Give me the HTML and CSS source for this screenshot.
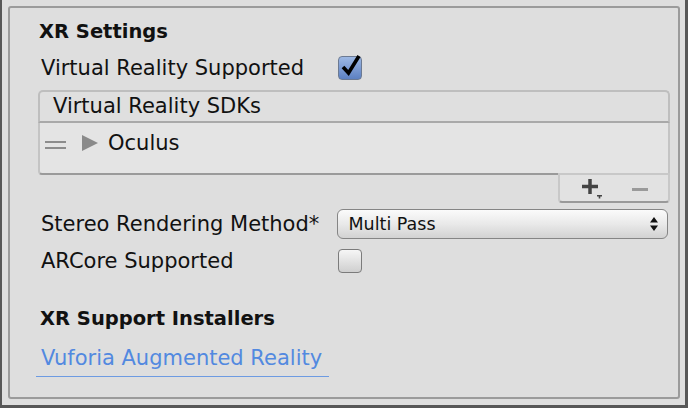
FILE: index.html
```html
<!DOCTYPE html>
<html>
<head>
<meta charset="utf-8">
<link rel="stylesheet" href="styles.css">
</head>
<body>
<div class="frame">
  <div class="panel">
    <div class="title t1">XR Settings</div>
    <div class="row r-vr">
      <span class="label">Virtual Reality Supported</span>
      <span class="checkbox checked">
        <svg class="check" width="22" height="26" viewBox="0 0 22 26"><path d="M3 15 L8.5 21 L19 4" fill="none" stroke="#000" stroke-width="3.6" stroke-linejoin="miter" stroke-linecap="butt"/></svg>
      </span>
    </div>
    <div class="list">
      <div class="list-head">Virtual Reality SDKs</div>
      <div class="list-body">
        <div class="item">
          <span class="handle"></span>
          <svg class="tri" width="16" height="16" viewBox="0 0 16 16"><path d="M0 0 L16 8 L0 16 Z" fill="#8a8a8a"/></svg>
          <span class="item-name">Oculus</span>
        </div>
      </div>
      <div class="list-foot-wrap">
        <div class="list-foot">
          <span class="btn plus">
            <svg width="22" height="22" viewBox="0 0 22 22"><path d="M0 7.5 H16 M8 0 V15" stroke="#444" stroke-width="3.5" fill="none"/><path d="M15 16 H20 V17.5 H18.3 V19.5 H16.7 V17.5 H15 Z" fill="#444"/></svg>
          </span>
          <span class="btn minus"></span>
        </div>
      </div>
    </div>
    <div class="row r-stereo">
      <span class="label">Stereo Rendering Method*</span>
      <span class="dropdown">
        <span class="dd-text">Multi Pass</span>
        <svg class="dd-arrows" width="8" height="14" viewBox="0 0 8 14"><path d="M4 0 L8 5.5 H0 Z M4 14 L8 8.5 H0 Z" fill="#111"/></svg>
      </span>
    </div>
    <div class="row r-ar">
      <span class="label">ARCore Supported</span>
      <span class="checkbox"></span>
    </div>
    <div class="title t2">XR Support Installers</div>
    <div class="link">Vuforia Augmented Reality</div>
  </div>
</div>
</body>
</html>
```

FILE: styles.css
```css
html, body {
  margin: 0;
  padding: 0;
}
body {
  width: 688px;
  height: 408px;
  overflow: hidden;
  background: #dedede;
  font-family: "DejaVu Sans", sans-serif;
  color: #111;
}
.frame {
  box-sizing: border-box;
  width: 688px;
  height: 408px;
  border-left: 2px solid #575757;
  border-right: 3px solid #575757;
  border-bottom: 3px solid #575757;
  background: #dedede;
  padding: 6px 0 0 6px;
}
.panel {
  box-sizing: border-box;
  width: 672px;
  height: 393px;
  border: 2px solid #9b9b9b;
  border-radius: 3px;
  padding-left: 29px;
  padding-right: 10px;
}
.title {
  font-weight: bold;
  font-size: 19.5px;
  height: 30px;
  line-height: 30px;
}
.t1 { margin-top: 9px; }
.row {
  display: flex;
  align-items: center;
  font-size: 21px;
}
.label {
  width: 297px;
  padding-left: 2px;
  white-space: nowrap;
}
.r-vr { height: 30px; margin-top: 6px; }
.checkbox {
  box-sizing: border-box;
  width: 24px;
  height: 24px;
  border: 1px solid #7b7b7b;
  border-radius: 4px;
  background: linear-gradient(#f6f6f6, #cfcfcf);
  position: relative;
}
.checked {
  background: linear-gradient(#9db8e4, #5c80c2);
  border-color: #6c7a92;
}
.check {
  position: absolute;
  left: 1px;
  top: -5px;
}
.list {
  margin-top: 7px;
  width: 632px;
  margin-left: -1px;
}
.list-head {
  box-sizing: border-box;
  height: 33px;
  border: 2px solid #bebebe;
  border-bottom: 2px solid #a9a9a9;
  border-radius: 5px 5px 0 0;
  background: #dfdfdf;
  padding-left: 13px;
  font-size: 21px;
  line-height: 29px;
}
.list-body {
  box-sizing: border-box;
  height: 52px;
  border: 2px solid #c4c4c4;
  border-top: 0;
  border-bottom: 2px solid #9a9a9a;
  border-radius: 0 0 0 4px;
  background: #e4e4e4;
}
.item {
  display: flex;
  align-items: center;
  height: 40px;
  padding-left: 5px;
}
.handle {
  width: 21px;
  height: 8px;
  border-top: 2px solid #8c8c8c;
  border-bottom: 2px solid #8c8c8c;
  box-sizing: border-box;
  margin-top: 4px;
}
.tri { margin-left: 16px; }
.item-name {
  margin-left: 10px;
  font-size: 21px;
}
.list-foot-wrap {
  display: flex;
  justify-content: flex-end;
}
.list-foot {
  box-sizing: border-box;
  width: 112px;
  height: 30px;
  margin-top: -2px;
  border: 2px solid #c8c8c8;
  border-top: 2px solid #c8c8c8;
  border-bottom: 2px solid #999;
  border-radius: 0 0 4px 4px;
  background: #e2e2e2;
  display: flex;
  align-items: center;
  padding-left: 22px;
}
.btn { display: block; }
.plus { width: 22px; height: 22px; margin-top: 3px; }
.minus {
  width: 16px;
  height: 3px;
  background: #9a9a9a;
  margin-left: 28px;
  margin-top: 2px;
}
.r-stereo { height: 30px; margin-top: 6px; }
.dropdown {
  box-sizing: border-box;
  width: 332px;
  height: 30px;
  margin-left: -1px;
  border: 1px solid #858585;
  border-radius: 6px;
  background: linear-gradient(#fbfbfb, #e9e9e9 50%, #d2d2d2);
  display: flex;
  align-items: center;
  justify-content: space-between;
  padding: 0 9px 0 11px;
}
.dd-text { font-size: 17.5px; }
.r-ar { height: 31px; margin-top: 6px; }
.t2 { margin-top: 27px; height: 31px; line-height: 31px; padding-left: 1px; }
.link {
  margin-top: 9px;
  margin-left: -3px;
  width: 293px;
  box-sizing: border-box;
  height: 34px;
  line-height: 31px;
  padding-left: 5px;
  font-size: 21px;
  color: #5289e0;
  border-bottom: 1px solid #6d9be2;
}
```
